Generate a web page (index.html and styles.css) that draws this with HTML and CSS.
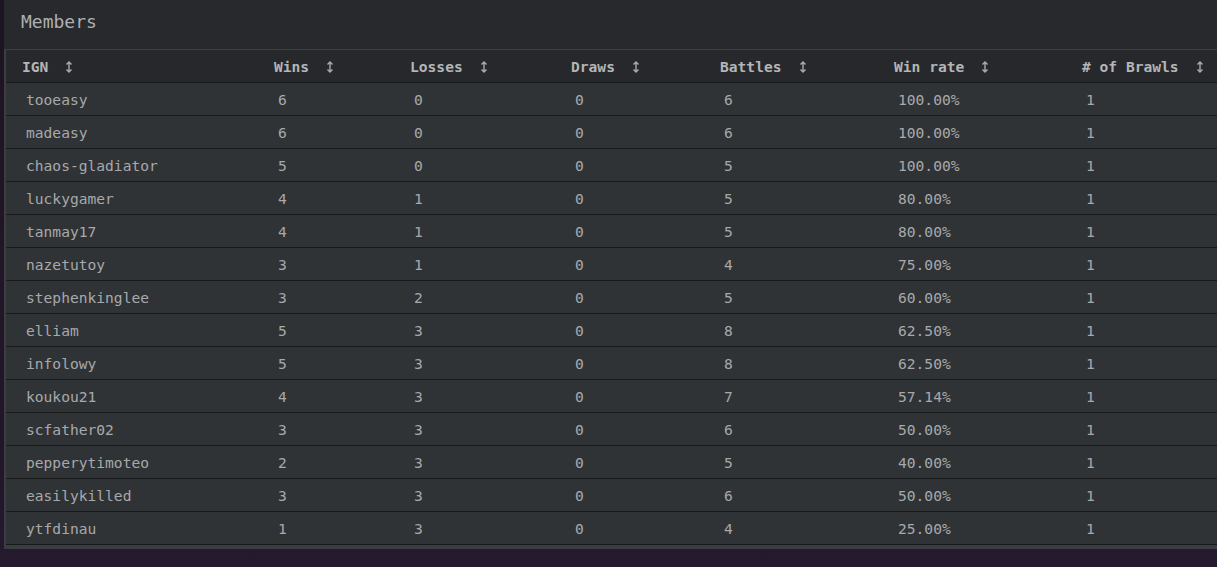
FILE: index.html
```html
<!DOCTYPE html>
<html>
<head>
<meta charset="utf-8">
<link rel="stylesheet" href="styles.css">
</head>
<body>
<section class="panel">
  <header class="panel-title">Members</header>
  <div class="table-wrap">
    <table class="members">
      <colgroup>
        <col class="c-ign"><col class="c-wins"><col class="c-losses"><col class="c-draws"><col class="c-battles"><col class="c-rate"><col class="c-brawls">
      </colgroup>
      <thead>
        <tr>
          <th>IGN<svg class="sort" viewBox="0 0 8 12"><path d="M4 1v10M1.5 3.5L4 1l2.5 2.5M1.5 8.5L4 11l2.5-2.5"/></svg></th>
          <th>Wins<svg class="sort" viewBox="0 0 8 12"><path d="M4 1v10M1.5 3.5L4 1l2.5 2.5M1.5 8.5L4 11l2.5-2.5"/></svg></th>
          <th>Losses<svg class="sort" viewBox="0 0 8 12"><path d="M4 1v10M1.5 3.5L4 1l2.5 2.5M1.5 8.5L4 11l2.5-2.5"/></svg></th>
          <th>Draws<svg class="sort" viewBox="0 0 8 12"><path d="M4 1v10M1.5 3.5L4 1l2.5 2.5M1.5 8.5L4 11l2.5-2.5"/></svg></th>
          <th>Battles<svg class="sort" viewBox="0 0 8 12"><path d="M4 1v10M1.5 3.5L4 1l2.5 2.5M1.5 8.5L4 11l2.5-2.5"/></svg></th>
          <th>Win rate<svg class="sort" viewBox="0 0 8 12"><path d="M4 1v10M1.5 3.5L4 1l2.5 2.5M1.5 8.5L4 11l2.5-2.5"/></svg></th>
          <th># of Brawls<svg class="sort" viewBox="0 0 8 12"><path d="M4 1v10M1.5 3.5L4 1l2.5 2.5M1.5 8.5L4 11l2.5-2.5"/></svg></th>
        </tr>
      </thead>
      <tbody>
        <tr><td>tooeasy</td><td>6</td><td>0</td><td>0</td><td>6</td><td>100.00%</td><td>1</td></tr>
        <tr><td>madeasy</td><td>6</td><td>0</td><td>0</td><td>6</td><td>100.00%</td><td>1</td></tr>
        <tr><td>chaos-gladiator</td><td>5</td><td>0</td><td>0</td><td>5</td><td>100.00%</td><td>1</td></tr>
        <tr><td>luckygamer</td><td>4</td><td>1</td><td>0</td><td>5</td><td>80.00%</td><td>1</td></tr>
        <tr><td>tanmay17</td><td>4</td><td>1</td><td>0</td><td>5</td><td>80.00%</td><td>1</td></tr>
        <tr><td>nazetutoy</td><td>3</td><td>1</td><td>0</td><td>4</td><td>75.00%</td><td>1</td></tr>
        <tr><td>stephenkinglee</td><td>3</td><td>2</td><td>0</td><td>5</td><td>60.00%</td><td>1</td></tr>
        <tr><td>elliam</td><td>5</td><td>3</td><td>0</td><td>8</td><td>62.50%</td><td>1</td></tr>
        <tr><td>infolowy</td><td>5</td><td>3</td><td>0</td><td>8</td><td>62.50%</td><td>1</td></tr>
        <tr><td>koukou21</td><td>4</td><td>3</td><td>0</td><td>7</td><td>57.14%</td><td>1</td></tr>
        <tr><td>scfather02</td><td>3</td><td>3</td><td>0</td><td>6</td><td>50.00%</td><td>1</td></tr>
        <tr><td>pepperytimoteo</td><td>2</td><td>3</td><td>0</td><td>5</td><td>40.00%</td><td>1</td></tr>
        <tr><td>easilykilled</td><td>3</td><td>3</td><td>0</td><td>6</td><td>50.00%</td><td>1</td></tr>
        <tr><td>ytfdinau</td><td>1</td><td>3</td><td>0</td><td>4</td><td>25.00%</td><td>1</td></tr>
      </tbody>
    </table>
  </div>
</section>
</body>
</html>
```

FILE: styles.css
```css
html, body {
  margin: 0;
  padding: 0;
  height: 100%;
  overflow: hidden;
}

body {
  background: linear-gradient(180deg, #1d1422 0%, #221729 85%, #251a2e 100%);
  font-family: "DejaVu Sans Mono", "Liberation Mono", monospace;
  color: #a9abad;
}

.panel {
  margin-left: 4px;
  width: 1240px;
  background: #27292d;
}

.panel-title {
  height: 49px;
  box-sizing: border-box;
  padding: 10px 0 0 17px;
  font-size: 18px;
  line-height: 24px;
  color: #aeb0b2;
  background: #27292d;
}

.table-wrap {
  border-top: 1px solid #3b3e42;
  border-left: 2px solid #3a3d41;
  background: #3a3d41;
  padding-bottom: 4px;
}

.members {
  border-collapse: collapse;
  table-layout: fixed;
  width: 1238px;
  font-size: 14.6px;
}

.c-ign { width: 252px; }
.c-wins { width: 136px; }
.c-losses { width: 161px; }
.c-draws { width: 149px; }
.c-battles { width: 174px; }
.c-rate { width: 188px; }
.c-brawls { width: 178px; }

.members th {
  text-align: left;
  font-weight: bold;
  color: #b3b5b7;
  background: #26282b;
  height: 32px;
  padding: 0 0 0 16px;
  border-bottom: 1px solid #17191b;
  white-space: nowrap;
}

.members td {
  background: #303336;
  height: 32px;
  padding: 0 0 0 20px;
  border-bottom: 1px solid #17191b;
  color: #a7a9ab;
  white-space: nowrap;
}

.sort {
  width: 8px;
  height: 12px;
  margin-left: 17px;
  vertical-align: -1px;
  fill: none;
  stroke: #a9abad;
  stroke-width: 1.4;
}
```
